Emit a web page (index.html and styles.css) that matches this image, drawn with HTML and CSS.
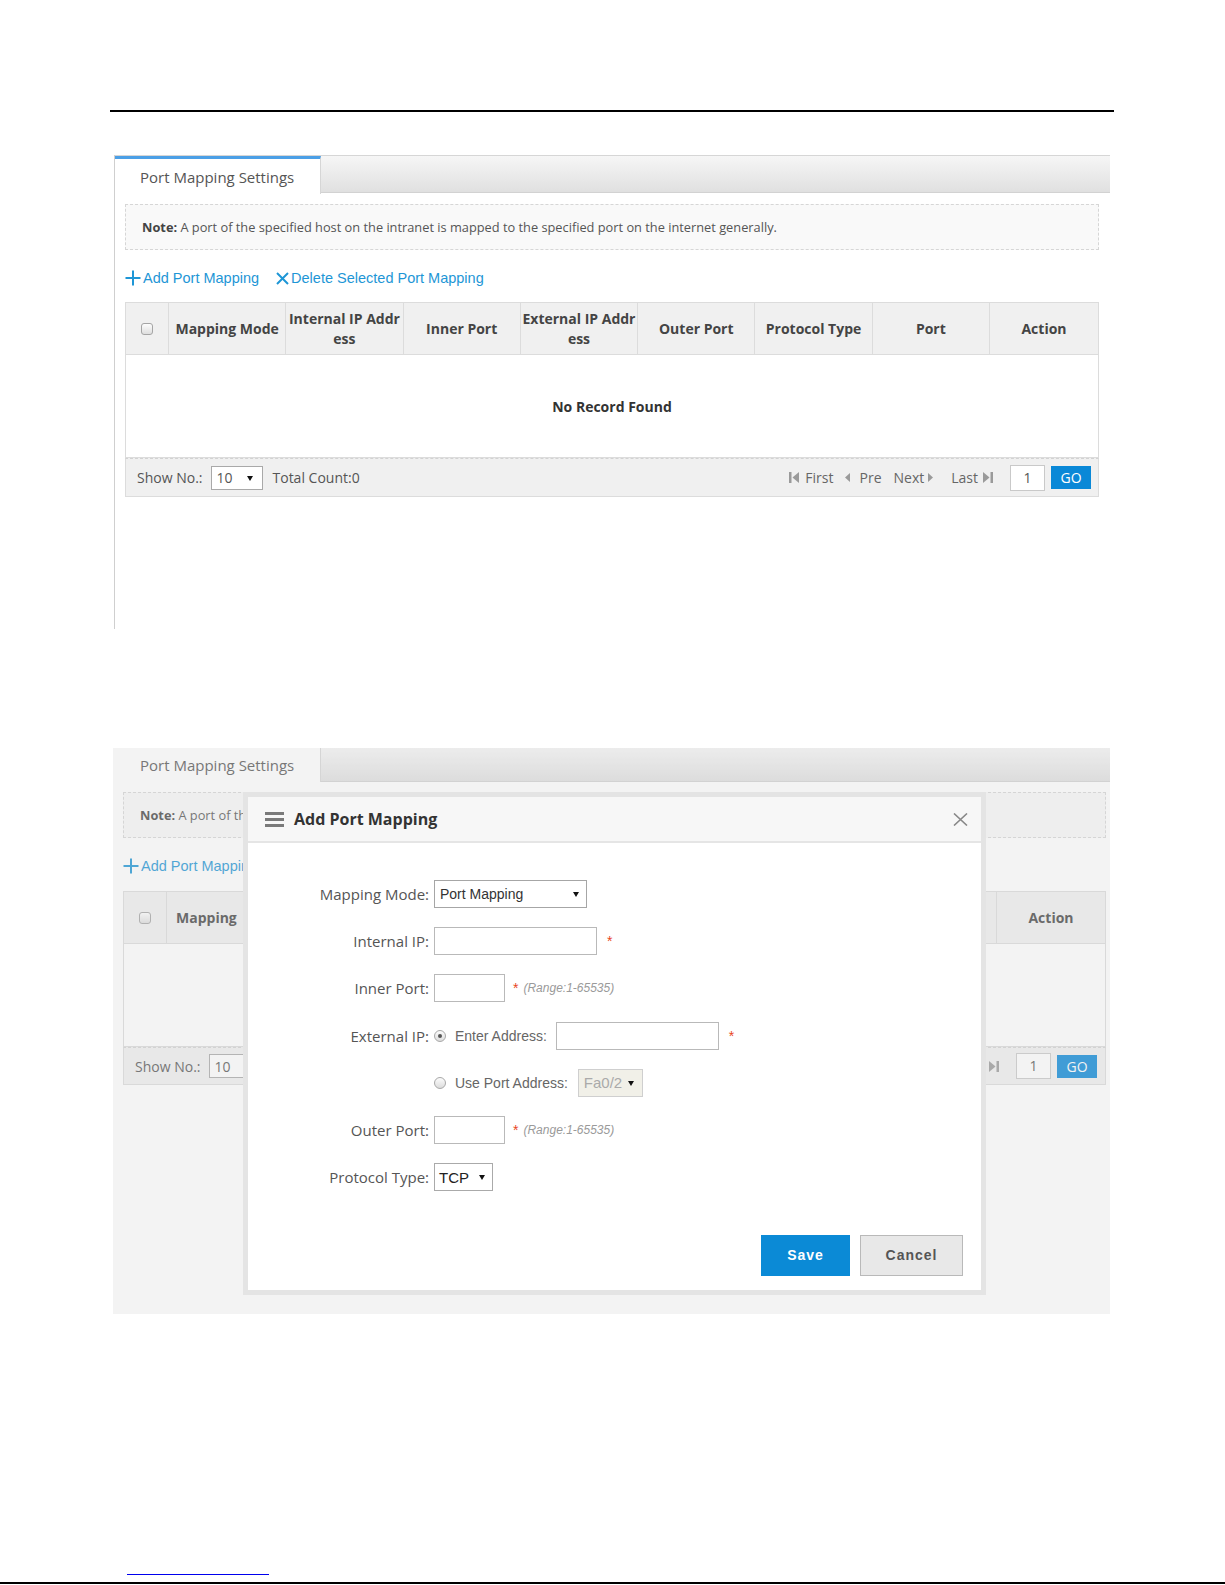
FILE: index.html
```html
<!DOCTYPE html>
<html>
<head>
<meta charset="utf-8">
<title>Port Mapping Settings</title>
<link rel="stylesheet" href="styles.css">
</head>
<body>
<div class="page">
  <div class="rule"></div>

  <div class="shot shot1">
    <div class="tabbar"><div class="tab tab-active">Port Mapping Settings</div></div>
    <div class="content">
      <div class="note"><b>Note:</b> A port of the specified host on the intranet is mapped to the specified port on the internet generally.</div>
      <div class="links">
        <a class="lnk"><svg class="ico-plus" viewBox="0 0 16 16"><path d="M8 0.5V15.5M0.5 8H15.5" stroke="#1e96d6" stroke-width="2" fill="none"/></svg>Add Port Mapping</a>
        <a class="lnk lnk-del"><svg class="ico-x" viewBox="0 0 13 13"><path d="M1 1L12 12M12 1L1 12" stroke="#1e96d6" stroke-width="2" fill="none"/></svg>Delete Selected Port Mapping</a>
      </div>
      <table class="grid">
        <colgroup><col class="c-chk"><col><col><col><col><col><col><col><col class="c-act"></colgroup>
        <thead>
          <tr>
            <th class="th-chk"><span class="chk"></span></th>
            <th>Mapping Mode</th>
            <th>Internal IP Address</th>
            <th>Inner Port</th>
            <th>External IP Address</th>
            <th>Outer Port</th>
            <th>Protocol Type</th>
            <th>Port</th>
            <th>Action</th>
          </tr>
        </thead>
        <tbody>
          <tr><td colspan="9" class="empty">No Record Found</td></tr>
        </tbody>
      </table>
      <div class="pager">
        <div class="pg-left">
          <span>Show No.:</span>
          <span class="sel sel-num">10<i class="arr"></i></span>
          <span class="total">Total Count:0</span>
        </div>
        <div class="pg-right">
          <svg class="pi pi-first" viewBox="0 0 10 11"><rect x="0" y="0" width="2.5" height="11" fill="#9a9a9a"/><path d="M10 0L3.5 5.5L10 11Z" fill="#9a9a9a"/></svg>
          <span class="pt pt-first">First</span>
          <svg class="pi pi-pre" viewBox="0 0 5 9"><path d="M5 0L0 4.5L5 9Z" fill="#9a9a9a"/></svg>
          <span class="pt pt-pre">Pre</span>
          <span class="pt pt-next">Next</span>
          <svg class="pi pi-next" viewBox="0 0 5 9"><path d="M0 0L5 4.5L0 9Z" fill="#9a9a9a"/></svg>
          <span class="pt pt-last">Last</span>
          <svg class="pi pi-last" viewBox="0 0 10 11"><path d="M0 0L6.5 5.5L0 11Z" fill="#9a9a9a"/><rect x="7.5" y="0" width="2.5" height="11" fill="#9a9a9a"/></svg>
          <span class="pgin">1</span>
          <span class="go">GO</span>
        </div>
      </div>
    </div>
  </div>

  <div class="shot shot2">
    <div class="tabbar tabbar2"><div class="tab tab2">Port Mapping Settings</div></div>
    <div class="content content2">
      <div class="note"><span class="cut cut-note"><b>Note:</b> A port of the specified host on the intranet is mapped to the specified port on the internet generally.</span></div>
      <div class="links">
        <a class="lnk"><svg class="ico-plus" viewBox="0 0 16 16"><path d="M8 0.5V15.5M0.5 8H15.5" stroke="#1e96d6" stroke-width="2" fill="none"/></svg><span class="cut cut-link">Add Port Mapping</span></a>
      </div>
      <table class="grid grid2">
        <colgroup><col class="c-chk"><col><col><col><col><col><col><col><col class="c-act"></colgroup>
        <thead>
          <tr>
            <th class="th-chk"><span class="chk"></span></th>
            <th class="th-cut"><span class="cut cut-th">Mapping Mode</span></th>
            <th></th>
            <th></th>
            <th></th>
            <th></th>
            <th></th>
            <th></th>
            <th>Action</th>
          </tr>
        </thead>
        <tbody>
          <tr><td colspan="9" class="empty"></td></tr>
        </tbody>
      </table>
      <div class="pager pager2">
        <div class="pg-left pg-left2">
          <span>Show No.:</span>
          <span class="sel sel-num">10<i class="arr"></i></span>
        </div>
        <div class="pg-right">
          <svg class="pi pi-last" viewBox="0 0 10 11"><path d="M0 0L6.5 5.5L0 11Z" fill="#9a9a9a"/><rect x="7.5" y="0" width="2.5" height="11" fill="#9a9a9a"/></svg>
          <span class="pgin">1</span>
          <span class="go">GO</span>
        </div>
      </div>
    </div>

    <div class="mask"></div>

    <div class="dlg">
      <div class="dlg-head">
        <span class="burger"><i></i><i></i><i></i></span>
        <span class="dlg-title">Add Port Mapping</span>
        <svg class="close" viewBox="0 0 15 13"><path d="M1 0.5L14 12.5M14 0.5L1 12.5" stroke="#888" stroke-width="1.6" fill="none"/></svg>
      </div>
      <div class="dlg-body">
        <div class="form">
          <div class="lbl">Mapping Mode:</div>
          <div class="fld"><span class="sel sel-mode">Port Mapping<i class="arr"></i></span></div>

          <div class="lbl">Internal IP:</div>
          <div class="fld"><span class="inp inp-ip"></span><span class="req req-ip">*</span></div>

          <div class="lbl">Inner Port:</div>
          <div class="fld"><span class="inp inp-port"></span><span class="req">*</span><span class="hint">(Range:1-65535)</span></div>

          <div class="lbl">External IP:</div>
          <div class="fld"><span class="radio on"></span><span class="opt">Enter Address:</span><span class="inp inp-ip inp-ext"></span><span class="req req-ip">*</span></div>

          <div class="lbl"></div>
          <div class="fld"><span class="radio"></span><span class="opt">Use Port Address:</span><span class="sel sel-dis">Fa0/2<i class="arr"></i></span></div>

          <div class="lbl">Outer Port:</div>
          <div class="fld"><span class="inp inp-port"></span><span class="req">*</span><span class="hint">(Range:1-65535)</span></div>

          <div class="lbl">Protocol Type:</div>
          <div class="fld"><span class="sel sel-proto">TCP<i class="arr"></i></span></div>
        </div>
        <div class="btns">
          <span class="btn save">Save</span>
          <span class="btn cancel">Cancel</span>
        </div>
      </div>
    </div>
  </div>

  <div class="doclink"></div>
  <div class="bottom-rule"></div>
</div>
</body>
</html>
```

FILE: styles.css
```css
* { box-sizing: border-box; }

body {
  margin: 0;
  background: #fff;
  font-family: "Open Sans", "Noto Sans", sans-serif;
  color: #555;
}

.page {
  width: 1225px;
  height: 1585px;
  overflow: hidden;
}

.rule {
  margin: 110px 0 0 110px;
  width: 1004px;
  height: 2px;
  background: #000;
}

/* ---------- screenshot panels ---------- */
.shot {
  position: relative;
  background: #fff;
}

.shot1 {
  margin: 43px 0 0 114px;
  width: 996px;
  height: 474px;
  border-left: 1px solid #cfcfcf;
}

.shot2 {
  margin: 119px 0 0 113px;
  width: 997px;
  height: 566px;
}

.tabbar {
  display: flex;
  height: 38px;
  border-top: 1px solid #d6d6d6;
  border-bottom: 1px solid #d2d2d2;
  background: linear-gradient(#f6f6f6, #e0e0e0);
}

.tab {
  flex: none;
  width: 206px;
  height: 38px;
  background: #fff;
  border-right: 1px solid #d6d6d6;
  font-size: 15px;
  color: #555;
  white-space: nowrap;
}

.tab-active {
  border-top: 3px solid #4b9fe6;
  padding: 3px 0 0 25px;
  line-height: 31px;
}

.tabbar2 {
  height: 34px;
  border-top: none;
}

.tab2 {
  width: 208px;
  height: 34px;
  padding-left: 27px;
  line-height: 34px;
}

.content {
  padding: 0 11px 0 10px;
}

.content2 {
  padding: 0 4px 0 10px;
}

.note {
  margin-top: 11px;
  height: 46px;
  border: 1px dashed #d6d6d6;
  background: #f9f9f9;
  padding-left: 16px;
  line-height: 44px;
  font-size: 12.8px;
  color: #555;
  white-space: nowrap;
  overflow: hidden;
}

.note b { color: #444; }

.content2 .note { margin-top: 10px; }

.cut {
  display: inline-block;
  overflow: hidden;
  white-space: nowrap;
  vertical-align: top;
}

.cut-note { width: 104px; }
.cut-link { width: 102px; }
.cut-th { width: 64px; }

.links {
  margin-top: 18px;
  height: 20px;
  display: flex;
  align-items: center;
}

.lnk {
  display: flex;
  align-items: center;
  font-family: "Liberation Sans", Arial, sans-serif;
  font-size: 14.5px;
  color: #1e96d6;
  white-space: nowrap;
}

.ico-plus {
  width: 16px;
  height: 16px;
  margin-right: 2px;
}

.ico-x {
  width: 13px;
  height: 13px;
  margin-right: 2px;
}

.lnk-del { margin-left: 17px; }

/* ---------- table ---------- */
.grid {
  margin-top: 14px;
  width: 100%;
  table-layout: fixed;
  border-collapse: collapse;
  border: 1px solid #dcdcdc;
}

.grid2 { margin-top: 15px; }

.c-chk { width: 43px; }
.c-act { width: 109px; }

.grid th {
  height: 52px;
  background: #f0f0f0;
  border: 1px solid #dcdcdc;
  padding: 0 1px;
  font-size: 14px;
  font-weight: 700;
  color: #444;
  text-align: center;
  word-break: break-all;
  line-height: 20px;
}

.grid .th-chk { text-align: left; }
.grid .th-cut { text-align: left; padding-left: 9px; }

.chk {
  display: inline-block;
  width: 12px;
  height: 12px;
  margin: 0 0 2px 14px;
  border: 1px solid #a5a5a5;
  border-radius: 3px;
  background: linear-gradient(#fdfdfd, #dedede);
  vertical-align: middle;
}

.empty {
  height: 103px;
  text-align: center;
  font-size: 14px;
  font-weight: 700;
  color: #333;
  background: #fff;
}

.pager {
  height: 39px;
  display: flex;
  align-items: center;
  justify-content: space-between;
  background: #f0f0f0;
  border: 1px solid #dcdcdc;
  border-top: 1px dashed #d2d2d2;
  font-size: 14px;
  color: #555;
  padding: 0 7px 0 11px;
}

.pager2 { height: 38px; padding-right: 8px; }

.pg-left, .pg-right {
  display: flex;
  align-items: center;
  white-space: nowrap;
}

.pg-left2 {
  width: 109px;
  overflow: hidden;
}

.sel {
  position: relative;
  display: inline-flex;
  align-items: center;
  background: #fff;
  border: 1px solid #a9a9a9;
  white-space: nowrap;
  flex: none;
}

.arr {
  position: absolute;
  top: 50%;
  margin-top: -2px;
  width: 0;
  height: 0;
  border-left: 3.5px solid transparent;
  border-right: 3.5px solid transparent;
  border-top: 5px solid #111;
}

.sel-num {
  width: 52px;
  height: 24px;
  margin-left: 8px;
  padding-left: 5px;
  font-size: 14px;
  color: #555;
}

.sel-num .arr { right: 9px; }

.total { margin-left: 10px; }

.pi { display: block; }
.pi-first, .pi-last { width: 10px; height: 11px; }
.pi-pre, .pi-next { width: 5px; height: 9px; }

.pt { color: #666; }
.pt-first { margin-left: 6px; }
.pi-pre { margin-left: 11px; }
.pt-pre { margin-left: 10px; }
.pt-next { margin-left: 12px; }
.pi-next { margin-left: 4px; }
.pt-last { margin-left: 18px; }
.pi-last { margin-left: 5px; }

.pgin {
  margin-left: 17px;
  width: 35px;
  height: 26px;
  background: #fff;
  border: 1px solid #c9c9c9;
  text-align: center;
  line-height: 24px;
  color: #555;
}

.go {
  margin-left: 6px;
  width: 40px;
  height: 23px;
  background: #0a88d7;
  color: #fff;
  text-align: center;
  line-height: 23px;
}

/* ---------- overlay + dialog ---------- */
.mask {
  position: absolute;
  inset: 0;
  background: rgba(210, 210, 210, 0.27);
}

.dlg {
  position: absolute;
  left: 130px;
  top: 44px;
  width: 743px;
  border: 5px solid #e4e4e4;
  background: #fff;
}

.dlg-head {
  height: 46px;
  display: flex;
  align-items: center;
  background: #f7f7f7;
  border-bottom: 2px solid #e5e5e5;
  padding: 0 13px 0 17px;
}

.burger {
  display: flex;
  flex-direction: column;
  justify-content: space-between;
  width: 19px;
  height: 15px;
}

.burger i {
  display: block;
  height: 3px;
  background: #7a7a7a;
}

.dlg-title {
  margin-left: 10px;
  font-size: 16px;
  font-weight: 700;
  color: #333;
}

.close {
  margin-left: auto;
  width: 15px;
  height: 13px;
}

.dlg-body {
  padding: 27px 18px 14px 0;
}

.form {
  display: grid;
  grid-template-columns: 181px 1fr;
  grid-auto-rows: 47.3px;
  column-gap: 5px;
}

.lbl {
  display: flex;
  align-items: center;
  justify-content: flex-end;
  font-size: 15px;
  color: #555;
  white-space: nowrap;
}

.fld {
  display: flex;
  align-items: center;
  font-family: "Liberation Sans", Arial, sans-serif;
  font-size: 14px;
  color: #333;
  white-space: nowrap;
}

.sel-mode {
  width: 153px;
  height: 28px;
  padding-left: 5px;
  border-color: #a6a6a6;
}

.sel-mode .arr { right: 7px; }

.sel-dis {
  margin-left: 10px;
  width: 65px;
  height: 28px;
  padding-left: 5px;
  background: #f1f0e8;
  border-color: #cfcfcf;
  color: #aaa;
  font-size: 15px;
}

.sel-dis .arr { right: 8px; }

.sel-proto {
  width: 59px;
  height: 28px;
  padding-left: 4px;
  font-size: 15px;
  color: #222;
  border-color: #aaa;
}

.sel-proto .arr { right: 7px; }

.inp {
  display: block;
  height: 28px;
  border: 1px solid #b9b9b9;
  background: #fff;
}

.inp-ip { width: 163px; }
.inp-port { width: 71px; }
.inp-ext { margin-left: 9px; }

.req {
  margin-left: 8px;
  color: #e8461e;
  font-size: 14px;
}

.req-ip { margin-left: 10px; }

.hint {
  margin-left: 5px;
  font-size: 12px;
  font-style: italic;
  color: #9a9a9a;
}

.radio {
  display: block;
  flex: none;
  width: 12px;
  height: 12px;
  border: 1px solid #a8a8a8;
  border-radius: 50%;
  background: linear-gradient(#fcfcfc, #dcdcdc);
  position: relative;
}

.radio.on::after {
  content: "";
  position: absolute;
  left: 3px;
  top: 3px;
  width: 4px;
  height: 4px;
  border-radius: 50%;
  background: #555;
}

.opt {
  margin-left: 9px;
  color: #666;
}

.btns {
  display: flex;
  justify-content: flex-end;
  gap: 10px;
  margin-top: 34px;
}

.btn {
  display: block;
  height: 41px;
  line-height: 41px;
  text-align: center;
  font-family: "Liberation Sans", Arial, sans-serif;
  font-size: 14px;
  font-weight: 700;
  letter-spacing: 1px;
}

.save {
  width: 89px;
  background: #0b8ad6;
  color: #fff;
}

.cancel {
  width: 103px;
  background: #e8e8e8;
  border: 1px solid #b9b9b9;
  line-height: 39px;
  color: #555;
}

/* ---------- page footer ---------- */
.doclink {
  margin: 260px 0 0 127px;
  width: 142px;
  height: 1px;
  background: #0000ee;
}

.bottom-rule {
  margin-top: 7px;
  width: 1225px;
  height: 2px;
  background: #000;
}
```
